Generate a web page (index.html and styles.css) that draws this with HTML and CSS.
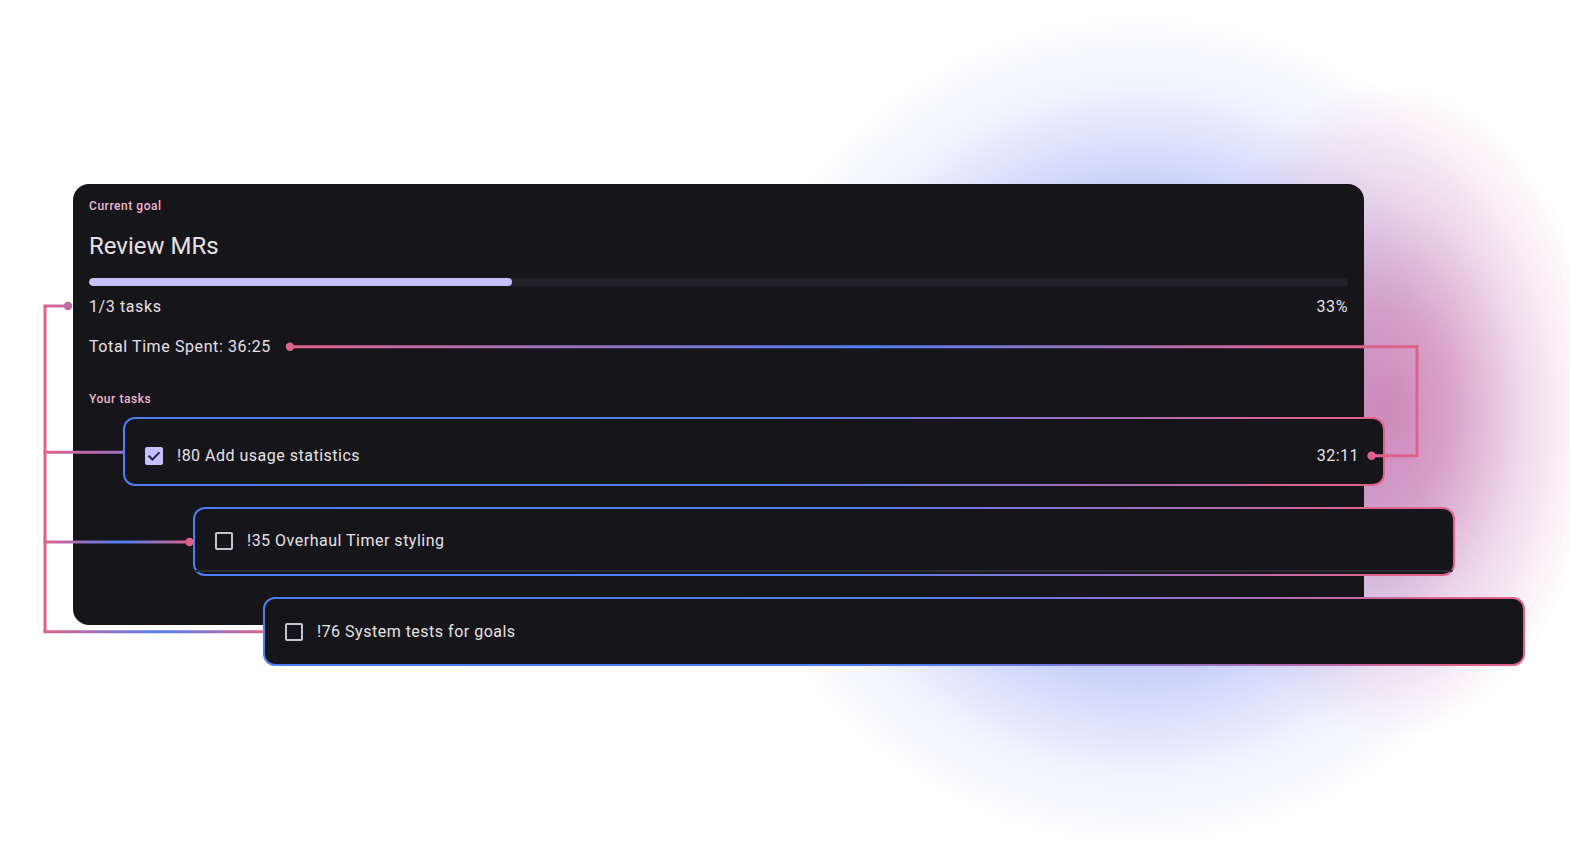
FILE: index.html
```html
<!DOCTYPE html>
<html lang="en">
<head>
<meta charset="utf-8">
<title>Current goal</title>
<link rel="stylesheet" href="styles.css">
</head>
<body>
  <main class="stage">
    <section class="card">
      <div class="label">Current goal</div>
      <h1 class="title">Review MRs</h1>
      <div class="progress"><div class="progress-fill" style="width:33.6%"></div></div>
      <div class="stats"><span>1/3 tasks</span><span>33%</span></div>
      <div class="time">Total Time Spent: 36:25</div>
      <div class="label tasks-label">Your tasks</div>
      <div class="tasks">
        <div class="task task-1">
          <span class="checkbox checked">
            <svg viewBox="0 0 18 18" width="18" height="18"><path d="M4.2 9.3 L7.4 12.5 L13.8 6.1" fill="none" stroke="#25224d" stroke-width="2" stroke-linecap="square"/></svg>
          </span>
          <span class="task-name">!80 Add usage statistics</span>
          <span class="task-time">32:11</span>
        </div>
        <div class="task task-2 has-divider">
          <span class="checkbox"></span>
          <span class="task-name">!35 Overhaul Timer styling</span>
        </div>
        <div class="task task-3">
          <span class="checkbox"></span>
          <span class="task-name">!76 System tests for goals</span>
        </div>
      </div>
    </section>
  </main>

  <svg class="connectors" width="1570" height="859" viewBox="0 0 1570 859">
    <defs>
      <linearGradient id="gTime" gradientUnits="userSpaceOnUse" x1="290" y1="0" x2="1417" y2="0">
        <stop offset="0" stop-color="#e0628a"/>
        <stop offset="0.51" stop-color="#4f80f5"/>
        <stop offset="0.9" stop-color="#e0628a"/>
        <stop offset="1" stop-color="#e0628a"/>
      </linearGradient>
      <linearGradient id="gTop" gradientUnits="userSpaceOnUse" x1="45" y1="0" x2="68" y2="0">
        <stop offset="0" stop-color="#dc6590"/>
        <stop offset="1" stop-color="#bf6aa9"/>
      </linearGradient>
      <linearGradient id="g1" gradientUnits="userSpaceOnUse" x1="45" y1="0" x2="124" y2="0">
        <stop offset="0" stop-color="#e0628a"/>
        <stop offset="1" stop-color="#9c70c8"/>
      </linearGradient>
      <linearGradient id="g2" gradientUnits="userSpaceOnUse" x1="45" y1="0" x2="190" y2="0">
        <stop offset="0" stop-color="#e0628a"/>
        <stop offset="0.52" stop-color="#4f80f5"/>
        <stop offset="1" stop-color="#e0628a"/>
      </linearGradient>
      <linearGradient id="g3" gradientUnits="userSpaceOnUse" x1="45" y1="0" x2="264" y2="0">
        <stop offset="0" stop-color="#e0628a"/>
        <stop offset="0.52" stop-color="#4f80f5"/>
        <stop offset="1" stop-color="#e0628a"/>
      </linearGradient>
    </defs>
    <!-- left bracket -->
    <path d="M45 306 V632" stroke="#e0628a" stroke-width="3" fill="none"/>
    <path d="M43.5 306 H68" stroke="url(#gTop)" stroke-width="3" fill="none"/>
    <circle cx="68" cy="306" r="4.2" fill="#bf6aa9"/>
    <path d="M43.5 452.3 H124" stroke="url(#g1)" stroke-width="3" fill="none"/>
    <path d="M43.5 542 H190" stroke="url(#g2)" stroke-width="3" fill="none"/>
    <circle cx="189.5" cy="542" r="4.2" fill="#e0628a"/>
    <path d="M43.5 631.7 H264" stroke="url(#g3)" stroke-width="3" fill="none"/>
    <!-- time bracket -->
    <path d="M290 346.7 H1417" stroke="url(#gTime)" stroke-width="3" fill="none"/>
    <path d="M1417 345.2 V455.7 H1372" stroke="#e0628a" stroke-width="3" fill="none"/>
    <circle cx="290" cy="346.7" r="4.2" fill="#e0628a"/>
    <circle cx="1371.5" cy="455.7" r="4.2" fill="#e0628a"/>
  </svg>
</body>
</html>
```

FILE: styles.css
```css
* {
  box-sizing: border-box;
}

html, body {
  margin: 0;
  padding: 0;
}

body {
  width: 1570px;
  height: 859px;
  overflow: hidden;
  position: relative;
  font-family: Roboto, "Noto Sans", "Liberation Sans", sans-serif;
  color: #e6e1e6;
  background-color: #ffffff;
  background-image:
    radial-gradient(ellipse 210px 330px at 1390px 410px, rgba(208, 118, 170, 0.78) 0%, rgba(210, 122, 172, 0.62) 30%, rgba(216, 132, 178, 0.28) 62%, rgba(220, 140, 180, 0) 100%),
    radial-gradient(ellipse 420px 420px at 1140px 430px, rgba(118, 140, 246, 0.9) 0%, rgba(125, 145, 246, 0.45) 55%, rgba(140, 155, 246, 0.12) 82%, rgba(150, 160, 246, 0) 100%);
}

.stage {
  padding: 184px 0 0 73px;
}

.card {
  width: 1291px;
  height: 441px;
  background: #16151a;
  border-radius: 16px;
  padding: 14px 16px 0 16px;
}

.label {
  font-size: 12px;
  line-height: 16px;
  font-weight: 500;
  letter-spacing: 0.55px;
  color: #efb8cf;
}

.title {
  margin: 16px 0 0 0;
  font-size: 24px;
  line-height: 32px;
  font-weight: 400;
  color: #e6e1e6;
}

.progress {
  margin-top: 16px;
  height: 8px;
  border-radius: 4px;
  background: #232228;
  overflow: hidden;
}

.progress-fill {
  height: 100%;
  border-radius: 4px;
  background: #c6c0ff;
}

.stats {
  margin-top: 9px;
  display: flex;
  justify-content: space-between;
  font-size: 16px;
  line-height: 24px;
  letter-spacing: 0.6px;
}

.time {
  margin-top: 16px;
  font-size: 16px;
  line-height: 24px;
  letter-spacing: 0.6px;
}

.tasks-label {
  margin-top: 32px;
}

.tasks {
  margin-top: 10px;
  display: flex;
  flex-direction: column;
  gap: 21px;
}

.task {
  position: relative;
  width: 1262px;
  height: 69px;
  flex: none;
  display: flex;
  align-items: center;
  gap: 14px;
  padding: 0 24px 0 20px;
  border: 2px solid transparent;
  border-radius: 12px;
  background:
    linear-gradient(#16151a, #16151a) padding-box,
    linear-gradient(90deg, #4d7ef5 0%, #5080f4 52%, #9a70c8 74%, #e0628a 94%, #e0628a 100%) border-box;
  font-size: 16px;
  line-height: 24px;
  letter-spacing: 0.5px;
  color: #e6e1e6;
}

.task-1 { margin-left: 34px; padding-top: 8px; }
.task-2 { margin-left: 104px; padding-bottom: 2px; }
.task-3 { margin-left: 174px; }

.has-divider::after {
  content: "";
  position: absolute;
  left: 0;
  right: 0;
  bottom: 2px;
  height: 2px;
  background: #2b2a30;
  border-radius: 0 0 10px 10px;
}

.checkbox {
  width: 18px;
  height: 18px;
  flex: none;
  border: 2px solid #cac4d0;
  border-radius: 2px;
  display: flex;
  align-items: center;
  justify-content: center;
}

.checkbox.checked {
  border: none;
  background: #c6c0ff;
}

.checkbox svg {
  display: block;
}

.task-name {
  flex: 1;
}

.task-time {
  flex: none;
}

.connectors {
  position: absolute;
  left: 0;
  top: 0;
  pointer-events: none;
}
```
